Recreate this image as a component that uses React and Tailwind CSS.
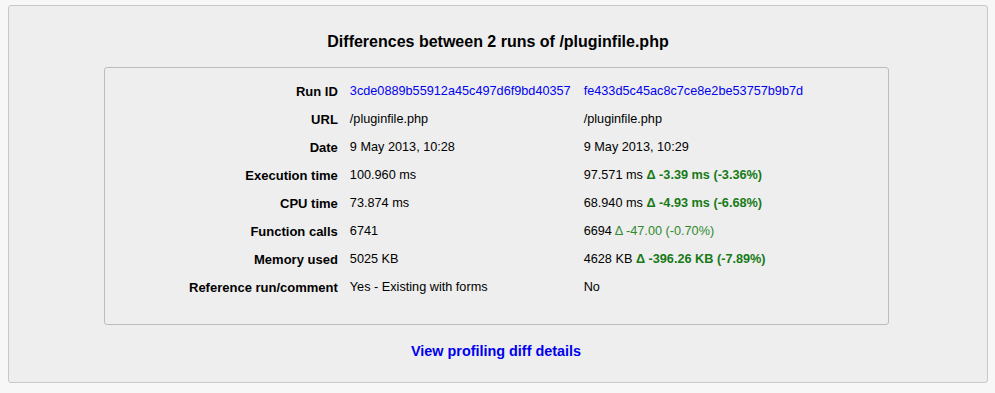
import React from "react";

const rows = [
  {
    label: "Run ID",
    a: <span className="text-[#0000ee]">3cde0889b55912a45c497d6f9bd40357</span>,
    b: <span className="text-[#0000ee]">fe433d5c45ac8c7ce8e2be53757b9b7d</span>,
  },
  { label: "URL", a: "/pluginfile.php", b: "/pluginfile.php" },
  { label: "Date", a: "9 May 2013, 10:28", b: "9 May 2013, 10:29" },
  {
    label: "Execution time",
    a: "100.960 ms",
    b: (
      <>
        97.571 ms <span className="font-bold text-[#177a17]">Δ -3.39 ms (-3.36%)</span>
      </>
    ),
  },
  {
    label: "CPU time",
    a: "73.874 ms",
    b: (
      <>
        68.940 ms <span className="font-bold text-[#177a17]">Δ -4.93 ms (-6.68%)</span>
      </>
    ),
  },
  {
    label: "Function calls",
    a: "6741",
    b: (
      <>
        6694 <span className="text-[#2f8a2f]">Δ -47.00 (-0.70%)</span>
      </>
    ),
  },
  {
    label: "Memory used",
    a: "5025 KB",
    b: (
      <>
        4628 KB <span className="font-bold text-[#177a17]">Δ -396.26 KB (-7.89%)</span>
      </>
    ),
  },
  { label: "Reference run/comment", a: "Yes - Existing with forms", b: "No" },
];

export default function App() {
  return (
    <div className="min-h-[393px] w-[995px] bg-[#f7f7f7] pt-[5px] pl-[8px] font-['Liberation_Sans',Arial,sans-serif] text-[13px] text-black">
      <div className="w-[980px] h-[378px] rounded-[3px] border border-[#c8c8c8] bg-[#eeeeee] flex flex-col items-center">
        <h2 className="mt-[26px] text-[16px] font-bold leading-[20px]">
          Differences between 2 runs of /pluginfile.php
        </h2>
        <div className="mt-[15px] self-start ml-[95px] w-[785px] h-[258px] rounded-[3px] border border-[#bcbcbc] pt-[10px] pl-[78px]">
          <table className="border-collapse">
            <tbody>
              {rows.map((r) => (
                <tr key={r.label} className="h-[28px]">
                  <td className="pl-[6px] pr-[6px] text-right font-bold whitespace-nowrap">{r.label}</td>
                  <td className="pl-[6px] pr-[13px] text-[12.7px] whitespace-nowrap">{r.a}</td>
                  <td className="px-[0px] text-[12.7px] whitespace-nowrap">{r.b}</td>
                </tr>
              ))}
            </tbody>
          </table>
        </div>
        <a href="#" className="mt-[16px] ml-[-4px] text-[14.4px] font-bold text-[#0000ee]">
          View profiling diff details
        </a>
      </div>
    </div>
  );
}
